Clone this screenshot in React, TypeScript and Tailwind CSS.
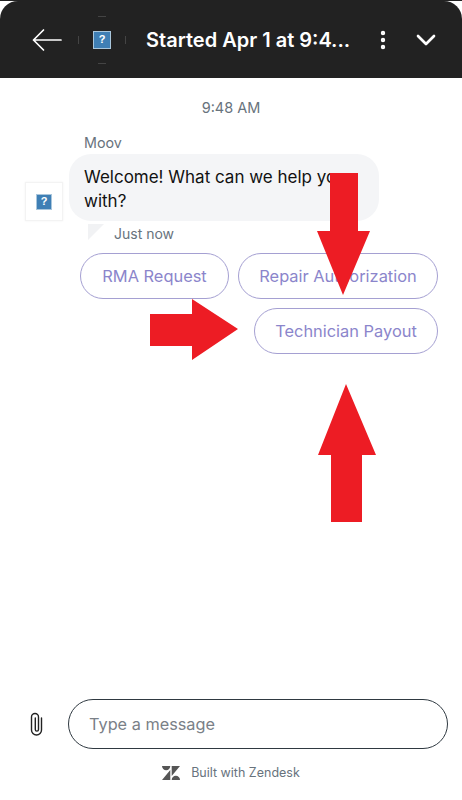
import { ChevronDown, MoreVertical } from "lucide-react";

function LogoMark({ size }: { size: string }) {
  return (
    <span
      className={`flex ${size} items-center justify-center border border-[#a9c6dc] bg-[#3f7fb5] font-["Liberation_Sans",sans-serif] text-[11px] font-bold leading-none text-white`}
    >
      ?
    </span>
  );
}

function ChoiceButton({ label, width }: { label: string; width: string }) {
  return (
    <button
      className={`h-[46px] ${width} rounded-full border border-[#a5a0d2] pt-[1px] text-[16.4px] text-[#8b85cb]`}
    >
      {label}
    </button>
  );
}

export default function App() {
  return (
    <div className="relative flex h-[800px] w-[462px] flex-col overflow-hidden bg-white font-['Inter',sans-serif]">
      <div className="h-px shrink-0 bg-[#222222]" />
      <header className="flex h-[77px] shrink-0 items-center rounded-t-[18px] bg-[#222222] pl-[32px] text-white">
        <svg
          viewBox="0 0 30 24"
          className="h-[24px] w-[30px] fill-none stroke-white"
          strokeWidth={1.7}
          strokeLinecap="round"
          strokeLinejoin="round"
        >
          <path d="M29 12H1.5M11.5 2 1.5 12l10 10" />
        </svg>
        <div className="relative ml-[16px] flex h-[48px] w-[48px] items-center justify-center">
          <LogoMark size="h-[18px] w-[18px]" />
          <span className="absolute left-[20px] top-0 h-px w-[8px] bg-[#444444]" />
          <span className="absolute bottom-0 left-[20px] h-px w-[8px] bg-[#444444]" />
          <span className="absolute left-0 top-[20px] h-[8px] w-px bg-[#444444]" />
          <span className="absolute right-0 top-[20px] h-[8px] w-px bg-[#444444]" />
        </div>
        <h1 className="ml-[20px] w-[206px] whitespace-nowrap text-[20px] font-semibold leading-none">
          Started Apr 1 at 9:4...
        </h1>
        <MoreVertical className="ml-[19px] h-[24px] w-[24px]" strokeWidth={2.4} />
        <ChevronDown className="ml-[15px] h-[32px] w-[32px]" strokeWidth={2} />
      </header>

      <main className="flex flex-1 flex-col">
        <p className="mt-[21px] text-center text-[14.5px] leading-[18px] text-[#68737d]">
          9:48 AM
        </p>

        <p className="ml-[84px] mt-[17px] text-[14.3px] leading-[18px] text-[#68737d]">
          Moov
        </p>
        <div className="mt-[2px] flex items-end pl-[25px]">
          <div className="flex h-[39px] w-[38px] items-center justify-center border border-[#f3f3f3] shadow-[0_0_2px_rgba(0,0,0,0.06)]">
            <LogoMark size="h-[16px] w-[16px]" />
          </div>
          <div className="ml-[6px] h-[67px] w-[310px] rounded-[22px] bg-[#f4f5f7] px-[15px] pt-[11px] text-[17px] leading-[24px] text-[#111111]">
            Welcome! What can we help you with?
          </div>
        </div>
        <div className="flex items-start pl-[88px]">
          <span className="mt-[3px] h-0 w-0 border-r-[16px] border-t-[16px] border-r-transparent border-t-[#f1f2f4]" />
          <span className="ml-[10px] mt-[4px] text-[14px] leading-[18px] text-[#68737d]">
            Just now
          </span>
        </div>

        <div className="mt-[10px] flex flex-col items-end gap-[9px] pr-[24px]">
          <div className="flex gap-[9px]">
            <ChoiceButton label="RMA Request" width="w-[149px]" />
            <ChoiceButton label="Repair Authorization" width="w-[200px]" />
          </div>
          <ChoiceButton label="Technician Payout" width="w-[184px]" />
        </div>
      </main>

      <footer className="h-[101px] shrink-0">
        <div className="flex items-center pl-[30px]">
          <svg
            viewBox="0 0 13 24"
            className="h-[24px] w-[13px] fill-none stroke-[#222222]"
            strokeWidth={1.4}
            strokeLinecap="round"
          >
            <path d="M11.5 6v12a5 5 0 0 1-10 0V5a3.5 3.5 0 0 1 7 0v12.5a1.6 1.6 0 0 1-3.2 0V6" />
          </svg>
          <div className="ml-[25px] flex h-[50px] w-[380px] items-center rounded-full border-[1.5px] border-[#2f3941] px-[20px] pt-[1px] text-[16.3px] text-[#7a8087]">
            Type a message
          </div>
        </div>
        <div className="mt-[16px] flex items-center justify-center gap-[11px] text-[12.5px] leading-[16px] text-[#68737d]">
          <svg viewBox="0 0 18 14" className="h-[14px] w-[18px] fill-[#555555]">
            <path d="M0 0h8.3A4.15 4.15 0 0 1 0 0zM9.7 0H18L9.7 10zM8.3 4 0 14h8.3zM18 14H9.7a4.15 4.15 0 0 1 8.3 0z" />
          </svg>
          Built with Zendesk
        </div>
      </footer>

      <svg className="absolute left-[317px] top-[173px] h-[122px] w-[53px] fill-[#ed1c24]" viewBox="0 0 53 122">
        <path d="M13 0h28v58h12L26 122 0 58h13z" />
      </svg>
      <svg className="absolute left-[150px] top-[299px] h-[61px] w-[88px] fill-[#ed1c24]" viewBox="0 0 88 61">
        <path d="M0 15h42V0l46 30-46 31V47H0z" />
      </svg>
      <svg className="absolute left-[318px] top-[384px] h-[138px] w-[58px] fill-[#ed1c24]" viewBox="0 0 58 138">
        <path d="M28 0l30 71H44v67H13V71H0z" />
      </svg>
    </div>
  );
}
